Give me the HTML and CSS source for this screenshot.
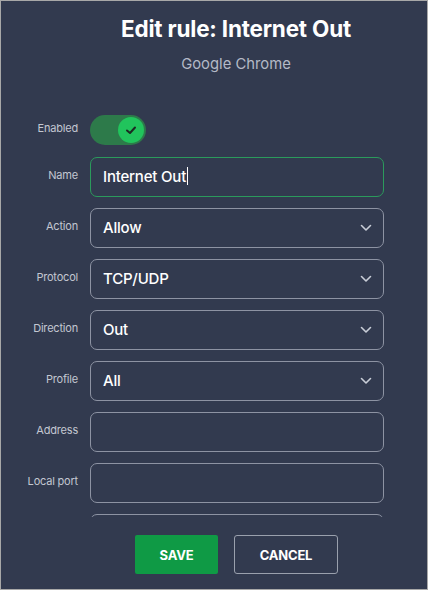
FILE: index.html
```html
<!DOCTYPE html>
<html>
<head>
<meta charset="utf-8">
<link rel="stylesheet" href="styles.css">
</head>
<body>
<div class="frame">
  <header class="head">
    <h1 class="title">Edit rule: Internet Out</h1>
    <p class="subtitle">Google Chrome</p>
  </header>
  <div class="form">
    <div class="row row-toggle">
      <span class="label">Enabled</span>
      <span class="toggle"><span class="knob"><svg width="14" height="14" viewBox="0 0 14 14"><polyline points="3,7.5 6,10 11,4.5" fill="none" stroke="#1c2a22" stroke-width="2" stroke-linecap="round" stroke-linejoin="round"/></svg></span></span>
    </div>
    <div class="row">
      <span class="label">Name</span>
      <div class="field field-active"><span class="value">Internet Out</span><span class="caret"></span></div>
    </div>
    <div class="row">
      <span class="label">Action</span>
      <div class="field"><span class="value">Allow</span><svg class="chev" width="12" height="8" viewBox="0 0 12 8"><polyline points="1.5,1.5 6,6 10.5,1.5" fill="none" stroke="#c9cdd7" stroke-width="1.6" stroke-linecap="round" stroke-linejoin="round"/></svg></div>
    </div>
    <div class="row">
      <span class="label">Protocol</span>
      <div class="field"><span class="value">TCP/UDP</span><svg class="chev" width="12" height="8" viewBox="0 0 12 8"><polyline points="1.5,1.5 6,6 10.5,1.5" fill="none" stroke="#c9cdd7" stroke-width="1.6" stroke-linecap="round" stroke-linejoin="round"/></svg></div>
    </div>
    <div class="row">
      <span class="label">Direction</span>
      <div class="field"><span class="value">Out</span><svg class="chev" width="12" height="8" viewBox="0 0 12 8"><polyline points="1.5,1.5 6,6 10.5,1.5" fill="none" stroke="#c9cdd7" stroke-width="1.6" stroke-linecap="round" stroke-linejoin="round"/></svg></div>
    </div>
    <div class="row">
      <span class="label">Profile</span>
      <div class="field"><span class="value">All</span><svg class="chev" width="12" height="8" viewBox="0 0 12 8"><polyline points="1.5,1.5 6,6 10.5,1.5" fill="none" stroke="#c9cdd7" stroke-width="1.6" stroke-linecap="round" stroke-linejoin="round"/></svg></div>
    </div>
    <div class="row">
      <span class="label">Address</span>
      <div class="field"></div>
    </div>
    <div class="row">
      <span class="label">Local port</span>
      <div class="field"></div>
    </div>
    <div class="row">
      <span class="label"></span>
      <div class="field"></div>
    </div>
  </div>
  <footer class="foot">
    <button class="btn btn-save">SAVE</button>
    <button class="btn btn-cancel">CANCEL</button>
  </footer>
</div>
</body>
</html>
```
FILE: styles.css
```css
* { box-sizing: border-box; }
html, body { margin: 0; padding: 0; background: #323a4f; }
body { font-family: Inter, "Liberation Sans", sans-serif; }
.frame {
  width: 428px;
  height: 590px;
  border: 1px solid #a8a8a8;
  background: #323a4f;
  display: flex;
  flex-direction: column;
  overflow: hidden;
}
.head {
  padding-top: 15px;
  text-align: center;
  padding-left: 44px;
}
.title {
  margin: 0;
  font-size: 22.5px;
  line-height: 26px;
  font-weight: 700;
  color: #ffffff;
  letter-spacing: -0.2px;
}
.subtitle {
  margin: 13px 0 0;
  font-size: 14.8px;
  line-height: 18px;
  color: #b4b9c6;
}
.form {
  margin-top: 42px;
  height: 402px;
  overflow: hidden;
  display: flex;
  flex-direction: column;
  gap: 11px;
  flex: none;
}
.row {
  display: flex;
  align-items: center;
  flex: none;
}
.row-toggle { margin-bottom: 1px; }
.label {
  width: 77px;
  margin-right: 12px;
  text-align: right;
  font-size: 11px;
  color: #c3c7d1;
  padding-bottom: 4px;
  letter-spacing: -0.2px;
}
.toggle {
  width: 56px;
  height: 30px;
  border-radius: 15px;
  background: #2d7a4a;
  display: flex;
  align-items: center;
  justify-content: flex-end;
  padding-right: 2px;
}
.knob {
  width: 26px;
  height: 26px;
  border-radius: 50%;
  background: #21c45c;
  display: flex;
  align-items: center;
  justify-content: center;
}
.field {
  width: 294px;
  height: 40px;
  border: 1.5px solid #8d93a3;
  border-radius: 7px;
  display: flex;
  align-items: center;
  padding: 0 11px 2px 12px;
}
.field-active { border-color: #2b9a5c; }
.value {
  font-size: 15px;
  font-weight: 500;
  color: #ffffff;
  flex: none;
  letter-spacing: -0.2px;
}
.caret {
  width: 1px;
  height: 18px;
  background: #ffffff;
  margin-left: 1px;
}
.chev { margin-left: auto; margin-top: 2px; }
.foot {
  display: flex;
  justify-content: center;
  gap: 16px;
  padding-top: 18px;
  padding-left: 45px;
}
.btn {
  height: 39px;
  font-family: inherit;
  font-size: 13px;
  font-weight: 700;
  color: #ffffff;
  cursor: pointer;
  letter-spacing: -0.2px;
}
.btn-save {
  width: 83px;
  background: #0f9a45;
  border: none;
  border-radius: 2px;
}
.btn-cancel {
  width: 104px;
  background: transparent;
  border: 1.5px solid #9aa0ad;
  border-radius: 3px;
}
```
